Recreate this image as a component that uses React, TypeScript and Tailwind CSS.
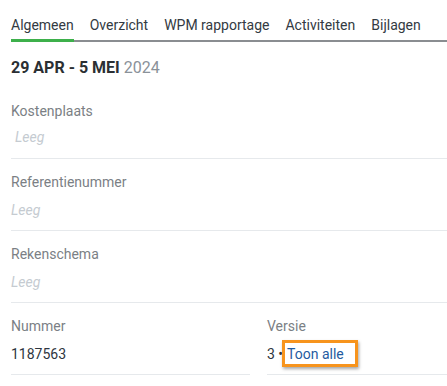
const tabs = ["Algemeen", "Overzicht", "WPM rapportage", "Activiteiten", "Bijlagen"];

function Field({ label, value, empty }: { label: string; value?: string; empty?: boolean }) {
  return (
    <div className="border-b border-[#e6e9ec] pt-[13px] pb-[10px]">
      <div className="text-[14px] leading-[20px] text-[#7b7f85]">{label}</div>
      <div
        className={
          empty
            ? "mt-[8px] text-[14px] leading-[20px] italic text-[#c5cbd1]"
            : "mt-[8px] text-[14px] leading-[20px] text-[#2e3640]"
        }
      >
        {value}
      </div>
    </div>
  );
}

export default function App() {
  return (
    <div className="w-[447px] h-[386px] overflow-hidden bg-white pl-[11px] font-['Roboto',_'Liberation_Sans',_sans-serif]">
      <div className="flex gap-[16px] border-b-2 border-[#8a8d91] pt-[16px]">
        {tabs.map((t, i) => (
          <div
            key={t}
            className={
              i === 0
                ? "-mb-[2px] border-b-[3px] border-[#3db04b] pb-[5px] text-[14px] leading-[18px] text-[#333a42] whitespace-nowrap"
                : "pb-[6px] text-[14px] leading-[18px] text-[#333a42] whitespace-nowrap"
            }
          >
            {t}
          </div>
        ))}
      </div>

      <div className="mt-[15px] text-[16px] leading-[22px] text-[#2b2f33]">
        <span className="font-bold">29 APR - 5 MEI</span>{" "}
        <span className="text-[#8a9199]">2024</span>
      </div>

      <div className="mt-[9px]">
        <div className="border-b border-[#e6e9ec] pt-[13px] pb-[11px]">
          <div className="text-[14px] leading-[20px] text-[#7b7f85]">Kostenplaats</div>
          <div className="mt-[6px] pl-[4px] text-[14px] leading-[20px] italic text-[#c5cbd1]">Leeg</div>
        </div>
        <Field label="Referentienummer" value="Leeg" empty />
        <Field label="Rekenschema" value="Leeg" empty />
        <div className="grid grid-cols-[239px_1fr] gap-[17px]">
          <Field label="Nummer" value="1187563" />
          <div className="border-b border-[#e6e9ec] pt-[13px] pb-[10px]">
            <div className="text-[14px] leading-[20px] text-[#7b7f85]">Versie</div>
            <div className="mt-[8px] flex items-center text-[14px] leading-[20px] text-[#2e3640]">
              <span>3 •</span>
              <span className="relative ml-[4px] text-[#1f5ba0]">
                Toon alle
                <span className="absolute -left-[5px] -right-[14px] -top-[4px] -bottom-[3px] border-[3px] border-[#f7941d] shadow-[1px_2px_3px_rgba(0,0,0,0.35)]" />
              </span>
            </div>
          </div>
        </div>
      </div>
    </div>
  );
}
